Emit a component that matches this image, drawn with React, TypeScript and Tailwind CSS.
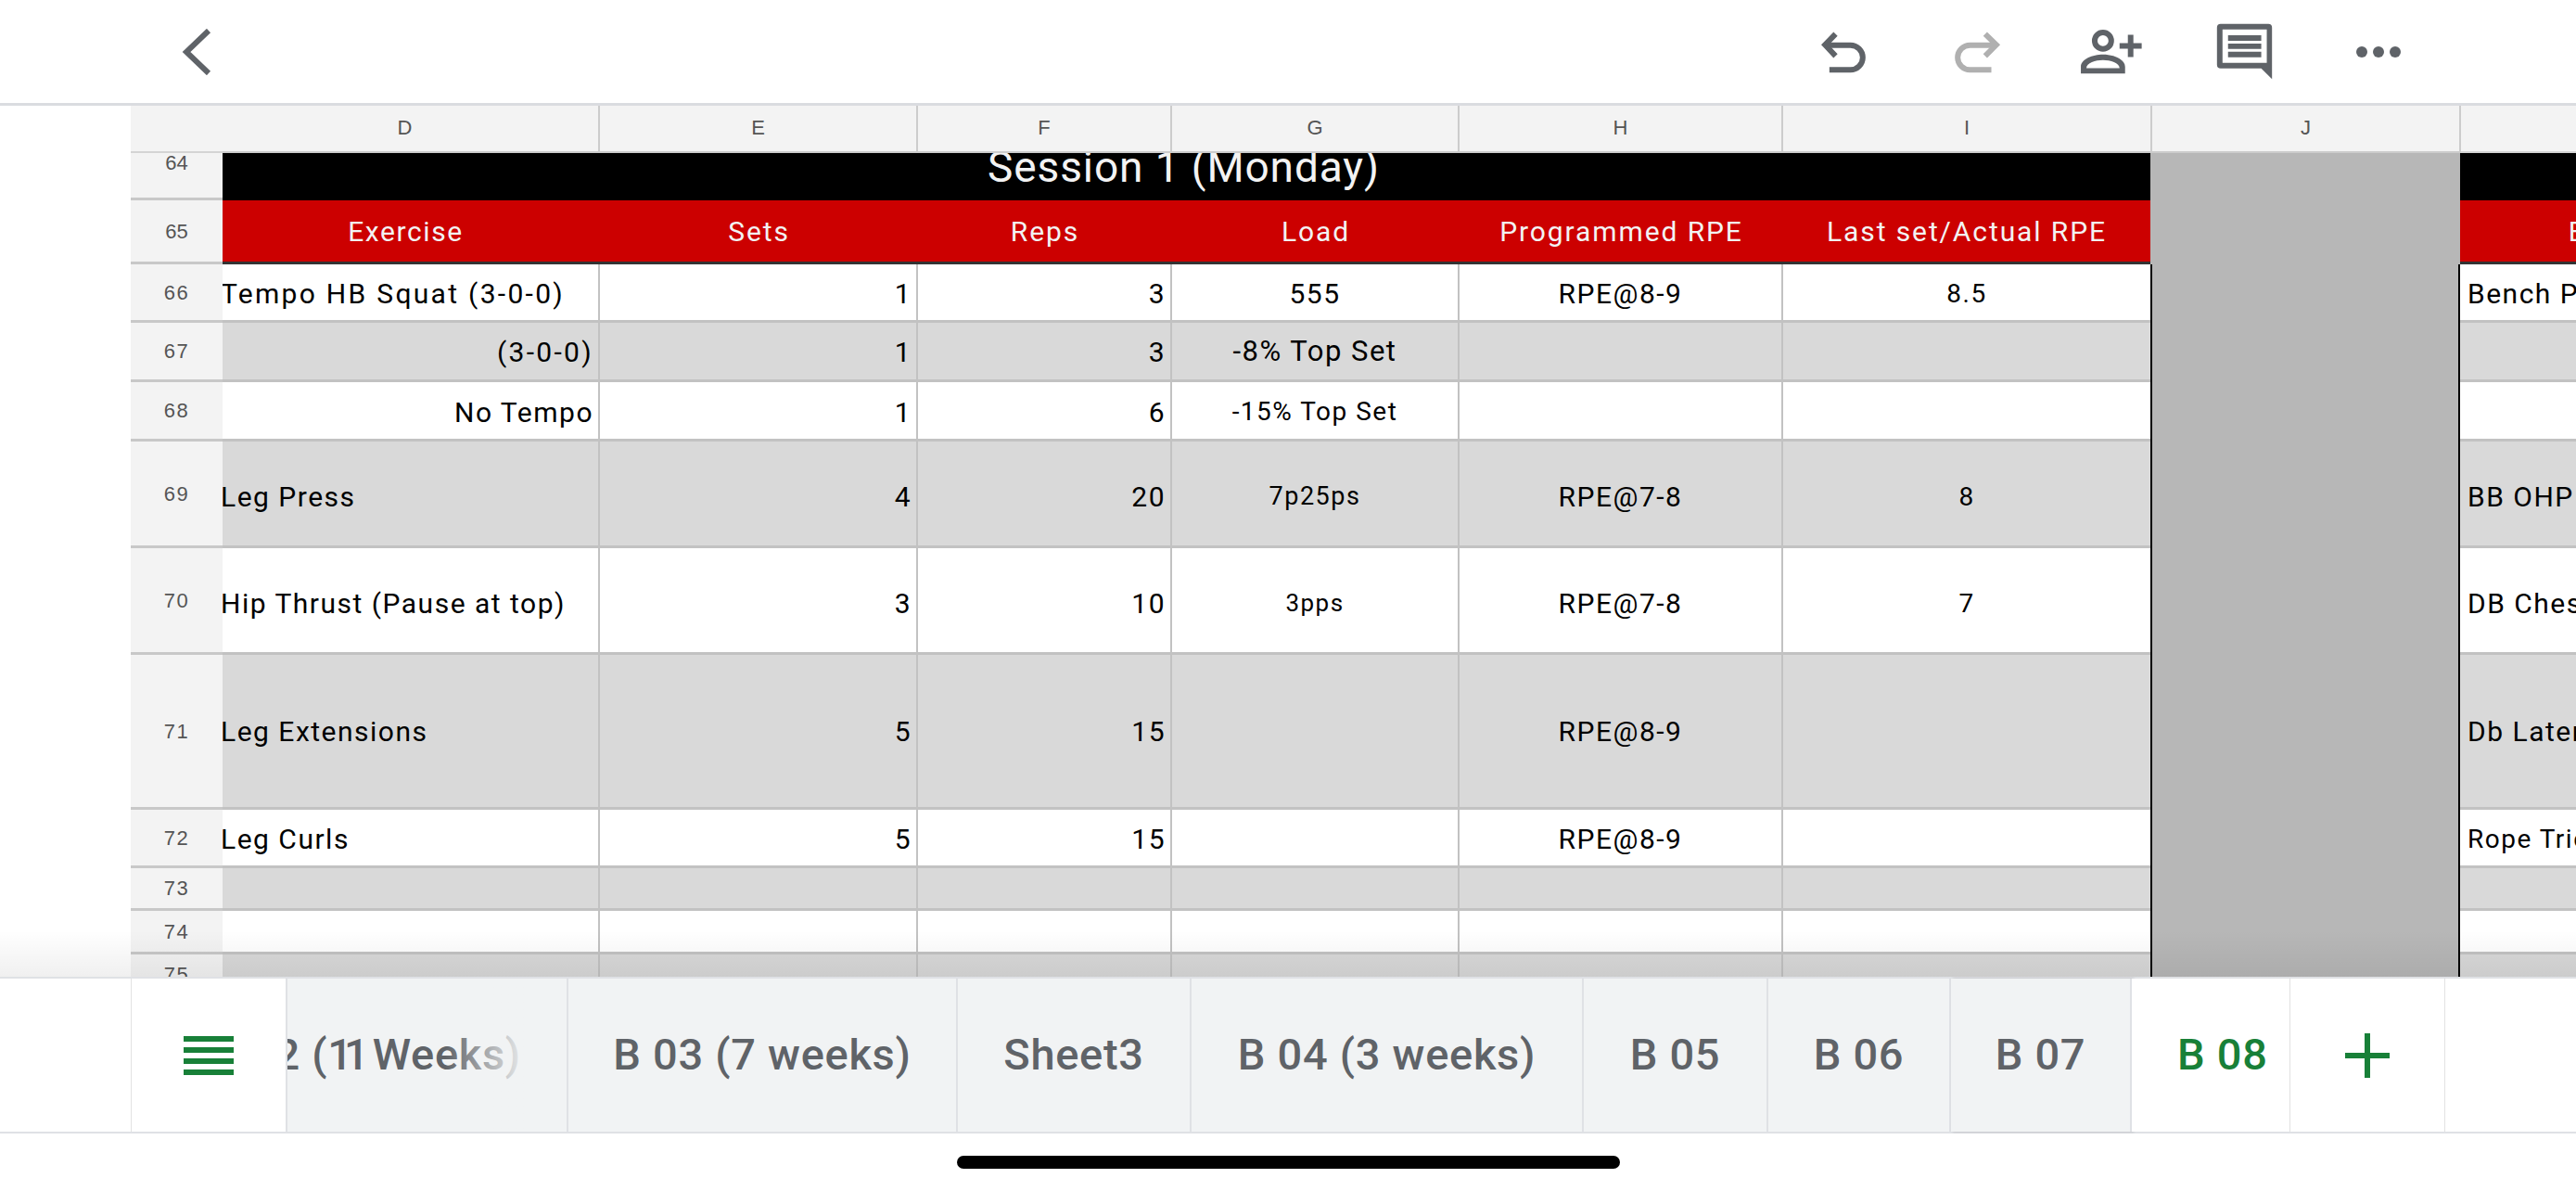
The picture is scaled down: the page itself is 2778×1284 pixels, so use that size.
const GRID = "grid grid-cols-[99px_407px_343px_274px_310px_349px_396px_334px_358px] w-[2637px]";
const GRIDH = "grid grid-cols-[99px_407px_343px_274px_310px_349px_398px_333px_357px] w-[2637px]";
const FONT = "font-['Roboto',sans-serif]";
const HDR = "font-['Liberation_Sans',sans-serif] text-[22px] text-[#555555]";

type R = {
  n: number; h: string; bg: "w" | "g"; pt: string; dt?: string;
  d?: string; da?: "r"; e?: string; f?: string; g?: string; gs?: string; hh?: string; i?: string; k?: string; ks?: string;
};

const rows: R[] = [
  { n: 66, h: "h-[63px]", bg: "w", pt: "pt-[3px]", dt: "tracking-[2.3px]", d: "Tempo HB Squat (3-0-0)", e: "1", f: "3", g: "555", hh: "RPE@8-9", i: "8.5", k: "Bench Press" },
  { n: 67, h: "h-[64px]", bg: "g", pt: "pt-[1px]", dt: "tracking-[2.3px]", d: "(3-0-0)", da: "r", e: "1", f: "3", g: "-8% Top Set", gs: "text-[31px]" },
  { n: 68, h: "h-[64px]", bg: "w", pt: "pt-[3px]", d: "No Tempo", da: "r", e: "1", f: "6", g: "-15% Top Set", gs: "text-[28px]" },
  { n: 69, h: "h-[115px]", bg: "g", pt: "pt-[7px]", d: "Leg Press", e: "4", f: "20", g: "7p25ps", gs: "text-[27px]", hh: "RPE@7-8", i: "8", k: "BB OHP" },
  { n: 70, h: "h-[115px]", bg: "w", pt: "pt-[7px]", d: "Hip Thrust (Pause at top)", e: "3", f: "10", g: "3pps", gs: "text-[26px]", hh: "RPE@7-8", i: "7", k: "DB Chest" },
  { n: 71, h: "h-[167px]", bg: "g", pt: "pt-[0px]", d: "Leg Extensions", e: "5", f: "15", hh: "RPE@8-9", k: "Db Lateral" },
  { n: 72, h: "h-[63px]", bg: "w", pt: "pt-[3px]", d: "Leg Curls", e: "5", f: "15", hh: "RPE@8-9", k: "Rope Tricep", ks: "text-[28px]" },
  { n: 73, h: "h-[46px]", bg: "g", pt: "pt-[0px]" },
  { n: 74, h: "h-[47px]", bg: "w", pt: "pt-[0px]" },
  { n: 75, h: "h-[46px]", bg: "g", pt: "pt-[0px]" },
];

function RowNo({ n }: { n: number }) {
  return (
    <div className={`flex items-center justify-center bg-[#f3f3f3] border-b-[3px] border-[#c8c8c8] ${HDR}`}>{n}</div>
  );
}

function Cell({ bg, align, size, pt, track, children, line = true }: { bg: "w" | "g"; align: "l" | "r" | "c" | "k"; size?: string; pt: string; track?: string; children?: React.ReactNode; line?: boolean }) {
  const a = align === "l" ? "justify-start" : align === "r" ? "justify-end pr-[5px]" : align === "k" ? "justify-start pl-[8px]" : "justify-center";
  return (
    <div className={`flex items-center overflow-hidden whitespace-nowrap text-black border-b-[3px] border-[#c2c2c2] ${pt} ${line ? "border-r-2" : ""} ${a} ${bg === "w" ? "bg-white" : "bg-[#d9d9d9]"} ${size ?? "text-[30px]"}`}>
      <span className={`${align === "l" ? "-ml-[2px]" : ""} ${track ?? ""}`}>{children}</span>
    </div>
  );
}

function Sheet() {
  const cols = ["E", "F", "G", "H", "I", "J"];
  const heads = ["Sets", "Reps", "Load", "Programmed RPE", "Last set/Actual RPE"];
  const red = "flex items-center justify-center bg-[#cc0000] border-b-[3px] border-[#333333] text-[#f3f3f3] text-[30px] whitespace-nowrap";
  return (
    <div className="relative flex-1 overflow-hidden pl-[141px] bg-white">
      <div className={`${GRIDH} h-[51px] ${HDR}`}>
        <div className="bg-[#f3f3f3] border-b-2 border-[#d4d4d4]" />
        <div className="flex items-center justify-center pr-[12px] pb-[2px] bg-[#f3f3f3] border-b-2 border-r-2 border-[#cccccc]">D</div>
        {cols.map((c) => (
          <div key={c} className="flex items-center justify-center pb-[2px] bg-[#f3f3f3] border-b-2 border-r-2 border-[#cccccc]">{c}</div>
        ))}
        <div className="bg-[#f3f3f3] border-b-2 border-[#d4d4d4]" />
      </div>

      <div className={`${GRID} h-[51px]`}>
        <div className={`flex justify-center items-start leading-[22px] bg-[#f3f3f3] border-b-[3px] border-[#c8c8c8] ${HDR}`}>64</div>
        <div className={`col-span-6 bg-black overflow-hidden flex items-end justify-center pr-[6px] text-[#f3f3f3] text-[46px] leading-[56px] pb-[8px] tracking-[0.9px] ${FONT}`}>
          Session 1 (Monday)
        </div>
        <div className="bg-[#b7b7b7]" />
        <div className="bg-black" />
      </div>

      <div className={`${GRID} h-[69px]`}>
        <div className={`flex items-center justify-center bg-[#f3f3f3] border-b-[3px] border-[#c8c8c8] ${HDR}`}>65</div>
        <div className={`${red} pr-[12px] ${FONT} tracking-[1.6px]`}>Exercise</div>
        {heads.map((t) => (
          <div key={t} className={`${red} ${FONT} tracking-[1.9px]`}>{t}</div>
        ))}
        <div className="bg-[#b7b7b7]" />
        <div className={`${red} ${FONT} tracking-[1.6px]`}>Exercise</div>
      </div>

      <div className={`${FONT} tracking-[1.5px]`}>
        {rows.map((r) => (
          <div key={r.n} className={`${GRID} ${r.h}`}>
            <RowNo n={r.n} />
            <Cell bg={r.bg} pt={r.pt} track={r.dt} align={r.da === "r" ? "r" : "l"}>{r.d}</Cell>
            <Cell bg={r.bg} pt={r.pt} align="r">{r.e}</Cell>
            <Cell bg={r.bg} pt={r.pt} align="r">{r.f}</Cell>
            <Cell bg={r.bg} pt={r.pt} align="c" size={r.gs}>{r.g}</Cell>
            <Cell bg={r.bg} pt={r.pt} align="c">{r.hh}</Cell>
            <Cell bg={r.bg} pt={r.pt} align="c" line={false} size="text-[28px]">{r.i}</Cell>
            <div className="bg-[#b7b7b7] border-x-2 border-black" />
            <Cell bg={r.bg} pt={r.pt} align="k" line={false} size={r.ks}>{r.k}</Cell>
          </div>
        ))}
      </div>

      <div className="absolute inset-x-0 bottom-0 h-[50px] bg-gradient-to-b from-transparent to-black/[0.06] pointer-events-none" />
    </div>
  );
}

function TopBar() {
  return (
    <div className="flex items-center h-[114px] shrink-0 bg-white border-b-[3px] border-[#dadce0] pl-[196px] pr-[188px]">
      <svg width="32" height="50" viewBox="0 0 32 50" fill="none" stroke="#5f6368" strokeWidth="6">
        <path d="M29 2 L5 25 L29 48" />
      </svg>
      <div className="flex-1" />
      <svg width="52" height="50" viewBox="70 60 155 150" fill="none" stroke="#5f6368" strokeWidth="18">
        <path d="M122 77 L88 112 L122 148" />
        <path d="M88 113 H170 A40 40 0 0 1 170 193 H102" />
      </svg>
      <svg className="ml-[92px]" width="52" height="50" viewBox="500 60 155 150" fill="none" stroke="#b0b0b0" strokeWidth="18">
        <path d="M604 77 L640 112 L604 148" />
        <path d="M640 113 H555 A40 40 0 0 0 555 193 H624" />
      </svg>
      <svg className="ml-[82px]" width="73" height="53" viewBox="60 60 220 160" fill="#5f6368">
        <circle cx="144" cy="105" r="27" fill="none" stroke="#5f6368" strokeWidth="18" />
        <path d="M198 113 H225 V86 H243 V113 H270 V131 H243 V158 H225 V131 H198 Z" />
        <path fillRule="evenodd" d="M72 212 V190 C72 165 110 150 144 150 C178 150 216 165 216 190 V212 Z M90 194 H198 C198 178 168 168 144 168 C120 168 90 178 90 194 Z" />
      </svg>
      <svg className="ml-[75px]" width="65" height="63" viewBox="505 45 195 190" fill="#5f6368">
        <path fillRule="evenodd" d="M525 50 H680 A12 12 0 0 1 692 62 V230 L657 195 H525 A12 12 0 0 1 513 183 V62 A12 12 0 0 1 525 50 Z M531 68 V177 H675 V68 Z" />
        <path d="M549 87 H657 V105 H549 Z M549 114 H657 V132 H549 Z M549 141 H657 V159 H549 Z" />
      </svg>
      <svg className="ml-[87px]" width="50" height="14" viewBox="960 120 150 42" fill="#5f6368">
        <circle cx="981" cy="141" r="18" />
        <circle cx="1035" cy="141" r="18" />
        <circle cx="1089" cy="141" r="18" />
      </svg>
    </div>
  );
}

const TAB = "flex items-center justify-center shrink-0 border-r-2 border-[#dfe1e5]";

function Tabs() {
  return (
    <div className="flex h-[169px] shrink-0 bg-white border-y-2 border-[#dfe1e5] font-['Roboto',sans-serif] font-medium text-[47px] tracking-[0.7px] text-[#5f6368] whitespace-nowrap">
      <div className="w-[142px] shrink-0 border-r border-[#e2e2e2]" />
      <div className="w-[168px] shrink-0 flex items-center justify-center border-r-2 border-[#dfe1e5]">
        <svg width="54" height="42" viewBox="0 0 54 42" fill="#188038">
          <rect width="54" height="6" y="0" />
          <rect width="54" height="6" y="12" />
          <rect width="54" height="6" y="24" />
          <rect width="54" height="6" y="36" />
        </svg>
      </div>
      <div className="relative flex items-center justify-end shrink-0 w-[303px] pr-[49px] overflow-hidden bg-[#f1f3f4] border-r-2 border-[#dfe1e5]">
        <span>B 02 (<span className="tracking-[-9px]">11</span><span className="ml-[13px]">Weeks)</span></span>
        <div className="absolute inset-y-0 left-[170px] w-[90px] bg-gradient-to-r from-transparent to-[#f1f3f4]" />
      </div>
      <div className={`${TAB} w-[420px] bg-[#f1f3f4]`}>B 03 (7 weeks)</div>
      <div className={`${TAB} w-[252px] bg-[#f1f3f4]`}>Sheet3</div>
      <div className={`${TAB} w-[423px] bg-[#f1f3f4]`}>B 04 (3 weeks)</div>
      <div className={`${TAB} w-[199px] bg-[#f1f3f4]`}>B 05</div>
      <div className={`${TAB} w-[197px] bg-[#f1f3f4]`}>B 06</div>
      <div className={`${TAB} w-[195px] bg-[#f1f3f4] border-r-0 shadow-[2px_0_3px_rgba(0,0,0,0.2)]`}>B 07</div>
      <div className="flex items-center shrink-0 w-[171px] pl-[49px] text-[#188038] bg-white border-r border-[#e2e2e2]">B 08</div>
      <div className="flex items-center justify-center shrink-0 w-[167px] border-r border-[#e2e2e2]">
        <svg width="48" height="48" viewBox="0 0 48 48" fill="#188038">
          <rect x="21" width="6" height="48" />
          <rect y="21" width="48" height="6" />
        </svg>
      </div>
    </div>
  );
}

export default function App() {
  return (
    <div className="flex flex-col w-[2778px] h-[1284px] overflow-hidden bg-white">
      <TopBar />
      <Sheet />
      <Tabs />
      <div className="flex justify-center h-[62px] shrink-0 pt-[24px]">
        <div className="w-[715px] h-[14px] rounded-full bg-black" />
      </div>
    </div>
  );
}
